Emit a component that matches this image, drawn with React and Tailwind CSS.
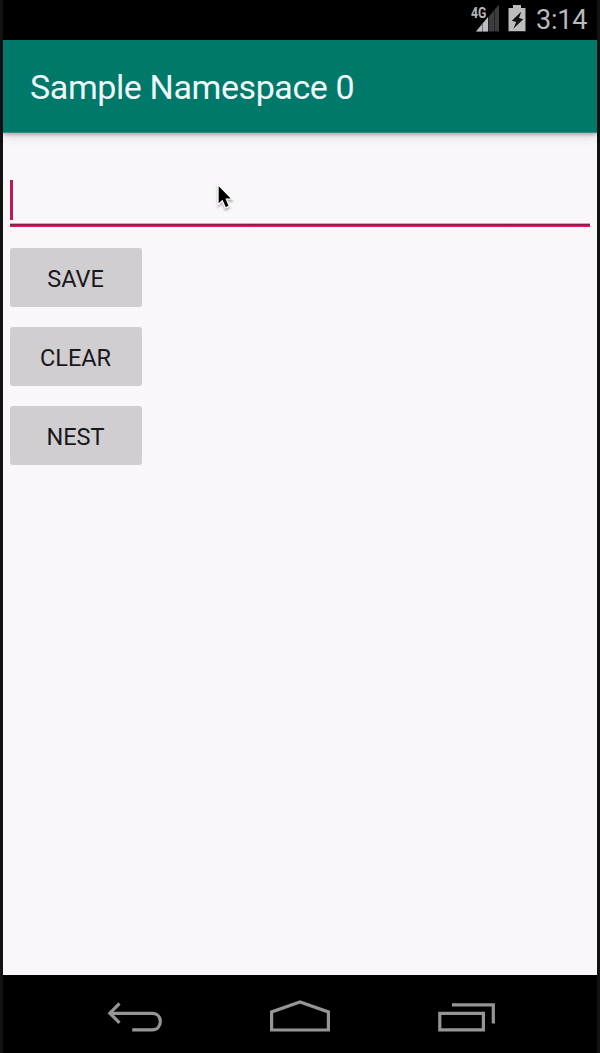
function StatusBar() {
  return (
    <header className="flex h-10 shrink-0 items-start bg-black pl-[467px] text-[#b9b9bb]">
      <svg className="h-10 w-9 shrink-0" viewBox="0 0 36 40" fill="none">
        <path d="M29 4.5V31.5H6Z" fill="#3c3b3d" />
        <path d="M18 17V31.5H6Z" fill="#bdbcbe" />
        <path d="M12.5 24V32M18.5 16V32M24.5 10V32" stroke="#000" strokeOpacity=".4" strokeWidth="1" />
        <path d="M0 0H17V18H0Z" fill="#000" />
        <text x="0.9" y="17.8" fill="#b9b9bb" fontSize="15.2" fontWeight="700" fontFamily="Roboto, sans-serif" textLength="15.4" lengthAdjust="spacingAndGlyphs">4G</text>
      </svg>
      <svg className="ml-[2px] h-10 w-[18px] shrink-0" viewBox="0 0 18 40">
        <path d="M5 5h8v3h4.5v23.2h-17V8H5Z" fill="#bdbcbe" />
        <path d="M13.2 11.8 3.8 20.8 8.2 22 5.3 28.8 15.2 19.2 11 17.9Z" fill="#111" />
      </svg>
      <span className="ml-[10px] whitespace-nowrap text-[27px] leading-[40px] tracking-[-0.2px]">3:14</span>
    </header>
  );
}

function Button({ children }) {
  return (
    <button className="h-[59px] w-[132px] rounded-[3px] bg-[#d0ced1] pr-px pt-px text-[23.5px] leading-[60px] text-[#19181b]">
      {children}
    </button>
  );
}

function NavigationBar() {
  return (
    <nav className="h-[78px] shrink-0 bg-black">
      <svg className="h-[78px] w-[594px]" viewBox="3 975 594 78" fill="none" stroke="#969497" strokeWidth="3.2">
        <path d="M119.5 1003.5 109.8 1013.2 119.5 1022.8M111 1013.3H152.2C157.5 1013.3 160.3 1017 160.3 1021.6S157.3 1029.9 152.2 1029.9H132.2" />
        <path d="M271.6 1030V1011.9L300 1001.9 328.4 1011.9V1030Z" />
        <path d="M439.8 1013.4H483.4V1029.9H439.8ZM452 1004.8H493.3V1023.5" />
      </svg>
    </nav>
  );
}

export default function App() {
  return (
    <div className="h-[1053px] w-[600px] bg-[#121212] px-[3px] font-['Roboto',sans-serif]">
      <div className="relative flex h-full flex-col bg-[#f9f7fa]">
        <StatusBar />
        <div className="z-10 flex h-[93px] shrink-0 items-center border-b border-[#348d83] bg-[#00796b] pl-[27px] shadow-[0_2px_3px_rgba(0,0,0,0.22),0_4px_10px_rgba(0,0,0,0.12)]">
          <h1 className="whitespace-nowrap pt-[2px] text-[34px] leading-[40px] tracking-[-0.4px] text-[#eef8f8]">Sample Namespace 0</h1>
        </div>
        <main className="flex flex-1 flex-col px-[7px] pt-[47px]">
          <div className="flex h-[47px] flex-col justify-between">
            <div className="h-10 w-[3px] bg-[#c2185b]" />
            <div className="h-1 border-t border-[#c8a9b8] bg-linear-to-b from-[#8b1a4a] from-30% to-[#f01c68] to-90%" />
          </div>
          <div className="mt-[21px] flex flex-col gap-[20.2px]">
            <Button>SAVE</Button>
            <Button>CLEAR</Button>
            <Button>NEST</Button>
          </div>
        </main>
        <NavigationBar />
        <svg className="absolute left-[212px] top-[180px] h-9 w-6 drop-shadow-[0_2px_1px_rgba(0,0,0,0.3)]" viewBox="0 0 24 36">
          <path d="M3 4.5V24.8L7.3 20.8 10.4 28 14.4 26.2 11.4 19.2H17.4Z" fill="#000" stroke="#fff" strokeWidth="1.3" />
        </svg>
      </div>
    </div>
  );
}
